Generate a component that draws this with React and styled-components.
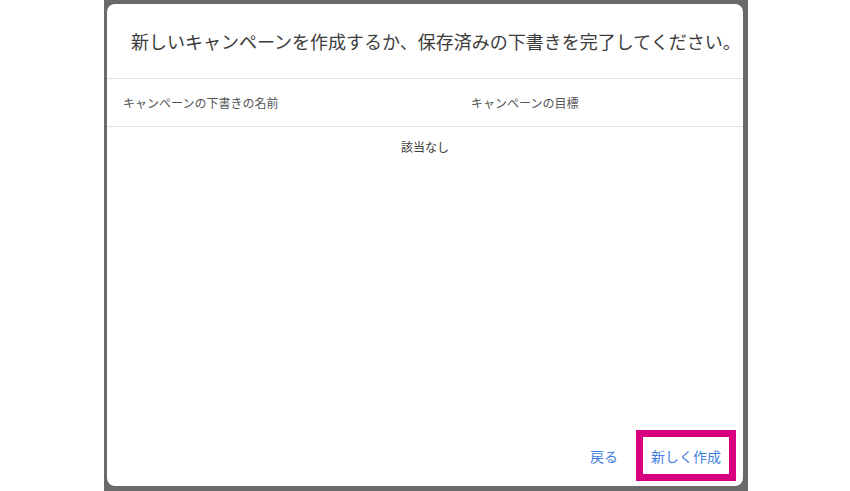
import React from "react";
import styled, { createGlobalStyle } from "styled-components";

const Global = createGlobalStyle`
  html, body { margin: 0; padding: 0; background: #ffffff; }
  body { font-family: "Noto Sans CJK JP", "Noto Sans", sans-serif; }
  * { box-sizing: border-box; }
`;

const Page = styled.div`
  width: 850px;
  height: 491px;
  display: flex;
  overflow: hidden;
`;

const Backdrop = styled.div`
  margin-left: 104px;
  width: 644px;
  height: 491px;
  background: #6a6a6a;
  padding: 4px 5px 5px 3px;
  display: flex;
`;

const Dialog = styled.div`
  flex: 1;
  background: #ffffff;
  border-radius: 8px;
  display: flex;
  flex-direction: column;
  overflow: visible;
`;

const Title = styled.h2`
  margin: 0;
  height: 75px;
  padding: 0 0 1px 24px;
  display: flex;
  align-items: center;
  font-size: 18px;
  font-weight: 400;
  line-height: 24px;
  color: #3c3c3c;
  white-space: nowrap;
  border-bottom: 1px solid #e0e0e0;
`;

const Row = styled.div`
  display: grid;
  grid-template-columns: 348px 1fr;
  height: ${(p) => p.$h}px;
  align-items: center;
  border-bottom: ${(p) => (p.$line ? "1px solid #e0e0e0" : "none")};
`;

const HeadCell = styled.div`
  padding: 0 16px;
  font-size: 12px;
  line-height: 16px;
  color: #555555;
`;

const Empty = styled.div`
  height: 40px;
  display: flex;
  align-items: center;
  justify-content: center;
  font-size: 12px;
  line-height: 16px;
  color: #3c3c3c;
`;

const Spacer = styled.div`
  flex: 1;
`;

const Actions = styled.div`
  display: flex;
  justify-content: flex-end;
  align-items: center;
  gap: 17px;
  padding: 0 14px 12px 0;
`;

const TextButton = styled.button`
  height: 37px;
  padding: 0 8px;
  border: none;
  background: #ffffff;
  font-family: inherit;
  font-size: 14px;
  line-height: 20px;
  color: #3f7fe0;
  cursor: pointer;
  outline: ${(p) => (p.$highlight ? "7px solid #d8007e" : "none")};
`;

export default function App() {
  return (
    <>
      <Global />
      <Page>
        <Backdrop>
          <Dialog>
            <Title>新しいキャンペーンを作成するか、保存済みの下書きを完了してください。</Title>
            <Row $h={48} $line>
              <HeadCell>キャンペーンの下書きの名前</HeadCell>
              <HeadCell>キャンペーンの目標</HeadCell>
            </Row>
            <Empty>該当なし</Empty>
            <Spacer />
            <Actions>
              <TextButton>戻る</TextButton>
              <TextButton $highlight>新しく作成</TextButton>
            </Actions>
          </Dialog>
        </Backdrop>
      </Page>
    </>
  );
}
